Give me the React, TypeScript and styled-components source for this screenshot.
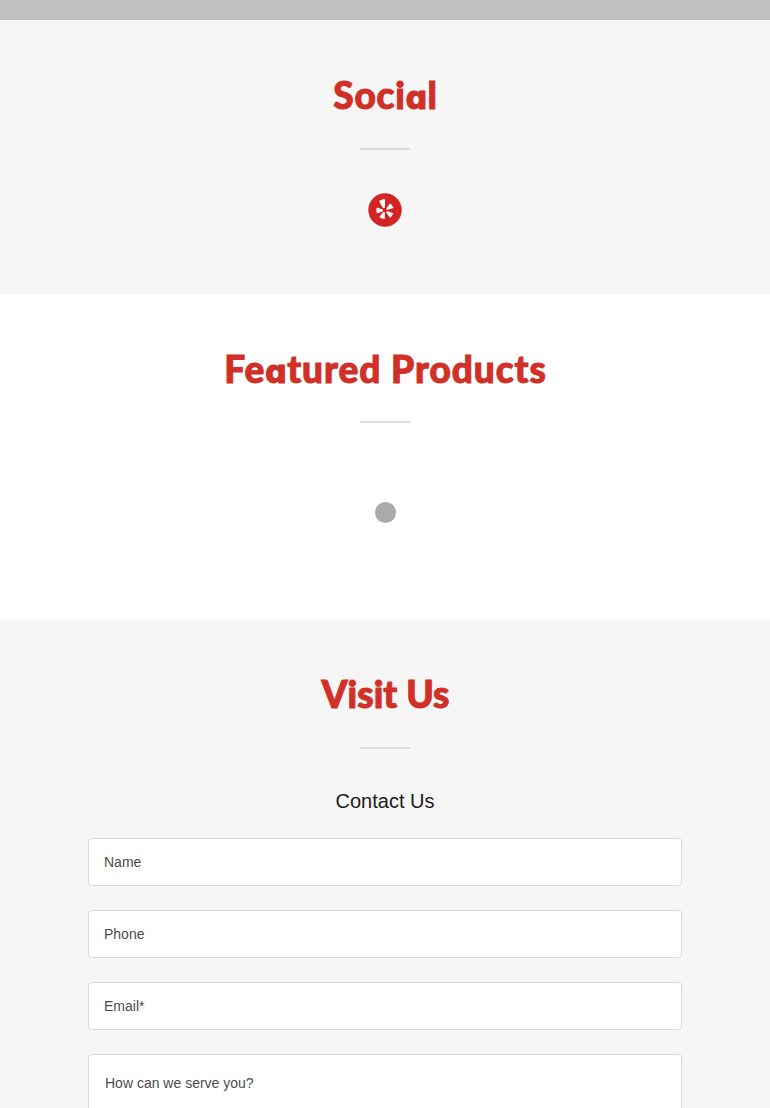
import React from 'react';
import styled, { createGlobalStyle } from 'styled-components';

const FIELDS = ['Name', 'Phone', 'Email*'];

// one-storey "a" in the headings
const Heading = ({ text, spacing }: { text: string; spacing: number }) => (
  <Title spacing={spacing}>
    {text
      .split(/(a)/)
      .map((part, i) => (part === 'a' ? <RoundA key={i}>a</RoundA> : part))}
  </Title>
);

const App = () => {
  return (
    <Page>
      <GlobalStyle />
      <TopBar />
      <Section height={274} shaded>
        <Heading text="Social" spacing={0.8} />
        <Line />
        <SocialLink href="#" aria-label="Yelp">
          <YelpIcon />
        </SocialLink>
      </Section>
      <Section height={325}>
        <Heading text="Featured Products" spacing={0.95} />
        <Line raised />
        <Loader />
      </Section>
      <Section height={700} shaded>
        <Heading text="Visit Us" spacing={0.05} />
        <Line />
        <Subtitle>Contact Us</Subtitle>
        <Form>
          {FIELDS.map((field) => (
            <Input key={field} placeholder={field} />
          ))}
          <TextArea placeholder="How can we serve you?" />
        </Form>
      </Section>
    </Page>
  );
};

const YelpIcon = () => (
  <svg width="34" height="34" viewBox="0 0 34 34">
    <circle cx="17" cy="17" r="16.7" fill="#d32323" />
    <g fill="#fff" stroke="#fff" strokeWidth="1.4" strokeLinejoin="round">
      <path d="M11.9 8.3 16 6.7 16.4 7 16.1 14.3 15.4 14.3Z" />
      <path d="M9.3 15.3 14.4 17.2 14.4 17.7 9.4 19.5Q8.6 17.4 9.3 15.3Z" />
      <path d="M22.2 11.3 24.7 14.5 19.5 16.1 19.1 15.7Z" />
      <path d="M19.2 18.9 24.5 20.6 22.3 23.8 18.9 19.3Z" />
      <path d="M15.7 19.8 16.2 20 16.1 25.3 12.3 24Z" />
    </g>
  </svg>
);

const GlobalStyle = createGlobalStyle`
  * {
    box-sizing: border-box;
  }
  body {
    margin: 0;
    font-family: 'Liberation Sans', Arial, sans-serif;
  }
`;

const Page = styled.div`
  height: 1108px;
  overflow: hidden;
`;

const TopBar = styled.div`
  height: 20px;
  background-color: #c1c1c1;
`;

const Section = styled.section<{ height: number; shaded?: boolean }>`
  display: flex;
  flex-direction: column;
  align-items: center;
  height: ${({ height }) => height}px;
  padding-top: 51px;
  background-color: ${({ shaded }) => (shaded ? '#f6f6f6' : '#fff')};
`;

const Title = styled.h2<{ spacing: number }>`
  height: 48px;
  margin: 0 0 29px;
  padding-left: 1px;
  color: #d03027;
  font-family: Lato, sans-serif;
  font-size: 37px;
  font-weight: 900;
  line-height: 48px;
  letter-spacing: ${({ spacing }) => spacing}px;
  white-space: nowrap;
  -webkit-text-stroke: 1px #d03027;
`;

const RoundA = styled.span`
  font-family: Inter, sans-serif;
  font-size: 33px;
  font-weight: 800;
  font-feature-settings: 'cv11';
  line-height: 1;
`;

const Line = styled.div<{ raised?: boolean }>`
  flex-shrink: 0;
  width: 50px;
  height: 2px;
  margin-top: ${({ raised }) => (raised ? -1 : 0)}px;
  background-color: #dcdcdc;
`;

const SocialLink = styled.a`
  display: flex;
  width: 34px;
  height: 34px;
  margin-top: 43px;
`;

const Loader = styled.div`
  width: 21px;
  height: 21px;
  margin-top: 79px;
  border-radius: 50%;
  background-color: #aaa;
`;

const Subtitle = styled.h4`
  margin: 38px 0 23px;
  color: #1b1b1b;
  font-size: 20px;
  font-weight: 400;
  line-height: 28px;
`;

const Form = styled.form`
  display: flex;
  flex-direction: column;
  gap: 24px;
  width: 594px;
`;

const Input = styled.input`
  height: 48px;
  padding: 0 15px;
  border: 1px solid #dadada;
  border-radius: 4px;
  outline: none;
  background-color: #fff;
  font-family: inherit;
  font-size: 14px;
  &::placeholder {
    color: #4b4b4b;
  }
`;

const TextArea = styled.textarea`
  height: 150px;
  padding: 20px 16px;
  border: 1px solid #dadada;
  border-radius: 4px;
  outline: none;
  resize: none;
  background-color: #fff;
  font-family: inherit;
  font-size: 14px;
  &::placeholder {
    color: #4b4b4b;
  }
`;

export default App;
